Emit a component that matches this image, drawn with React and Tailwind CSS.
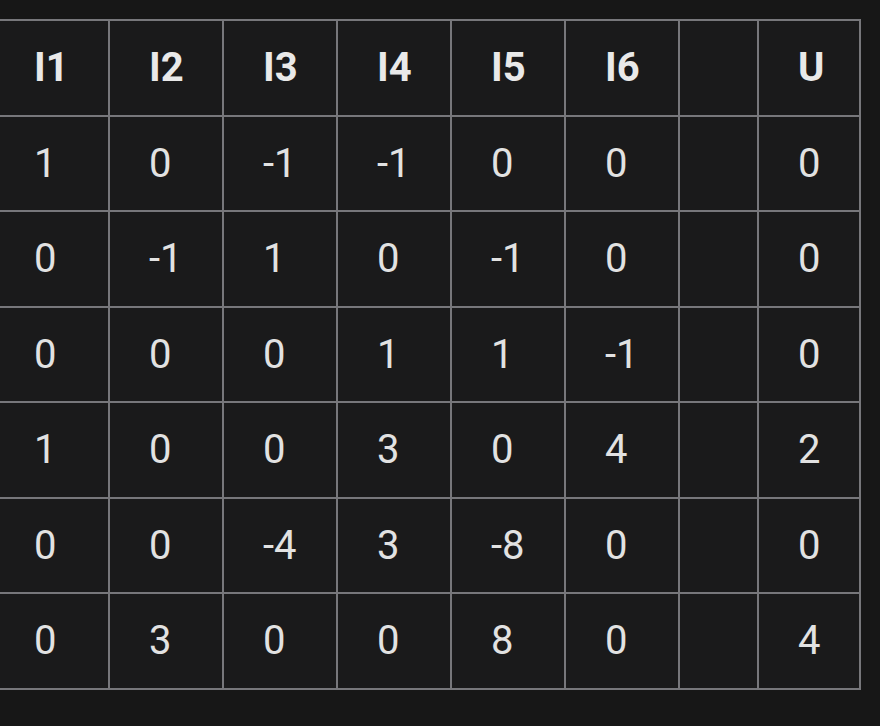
import React from "react";

const header = ["I1", "I2", "I3", "I4", "I5", "I6", "", "U"];
const rows = [
  ["1", "0", "-1", "-1", "0", "0", "", "0"],
  ["0", "-1", "1", "0", "-1", "0", "", "0"],
  ["0", "0", "0", "1", "1", "-1", "", "0"],
  ["1", "0", "0", "3", "0", "4", "", "2"],
  ["0", "0", "-4", "3", "-8", "0", "", "0"],
  ["0", "3", "0", "0", "8", "0", "", "4"],
];

const rowH = ["h-[94px]", "h-[93px]", "h-[94px]", "h-[93px]", "h-[94px]", "h-[93px]", "h-[94px]"];

function Row({ cells, bold, h }) {
  return (
    <div className={`grid grid-cols-[108px_112px_112px_112px_112px_112px_77px_100px] gap-x-[2px] ${h}`}>
      {cells.map((c, i) => (
        <div
          key={i}
          className={`flex items-center bg-[#1a1a1b] text-[40px] leading-none ${i === 0 ? "pl-[34px]" : "pl-[39px]"} ${bold ? "font-bold text-[#e9e9e9]" : "font-normal text-[#e2e2e2]"}`}
        >
          {c}
        </div>
      ))}
    </div>
  );
}

export default function App() {
  return (
    <div className="w-[880px] h-[726px] bg-[#171717] overflow-hidden pt-[19px]" style={{ fontFamily: "Roboto, 'Liberation Sans', sans-serif" }}>
      <div className="w-fit flex flex-col gap-y-[2px] bg-[#77777b] pt-[2px] pr-[2px] pb-[2px]">
        <Row cells={header} bold h={rowH[0]} />
        {rows.map((r, i) => (
          <Row key={i} cells={r} h={rowH[i + 1]} />
        ))}
      </div>
    </div>
  );
}
